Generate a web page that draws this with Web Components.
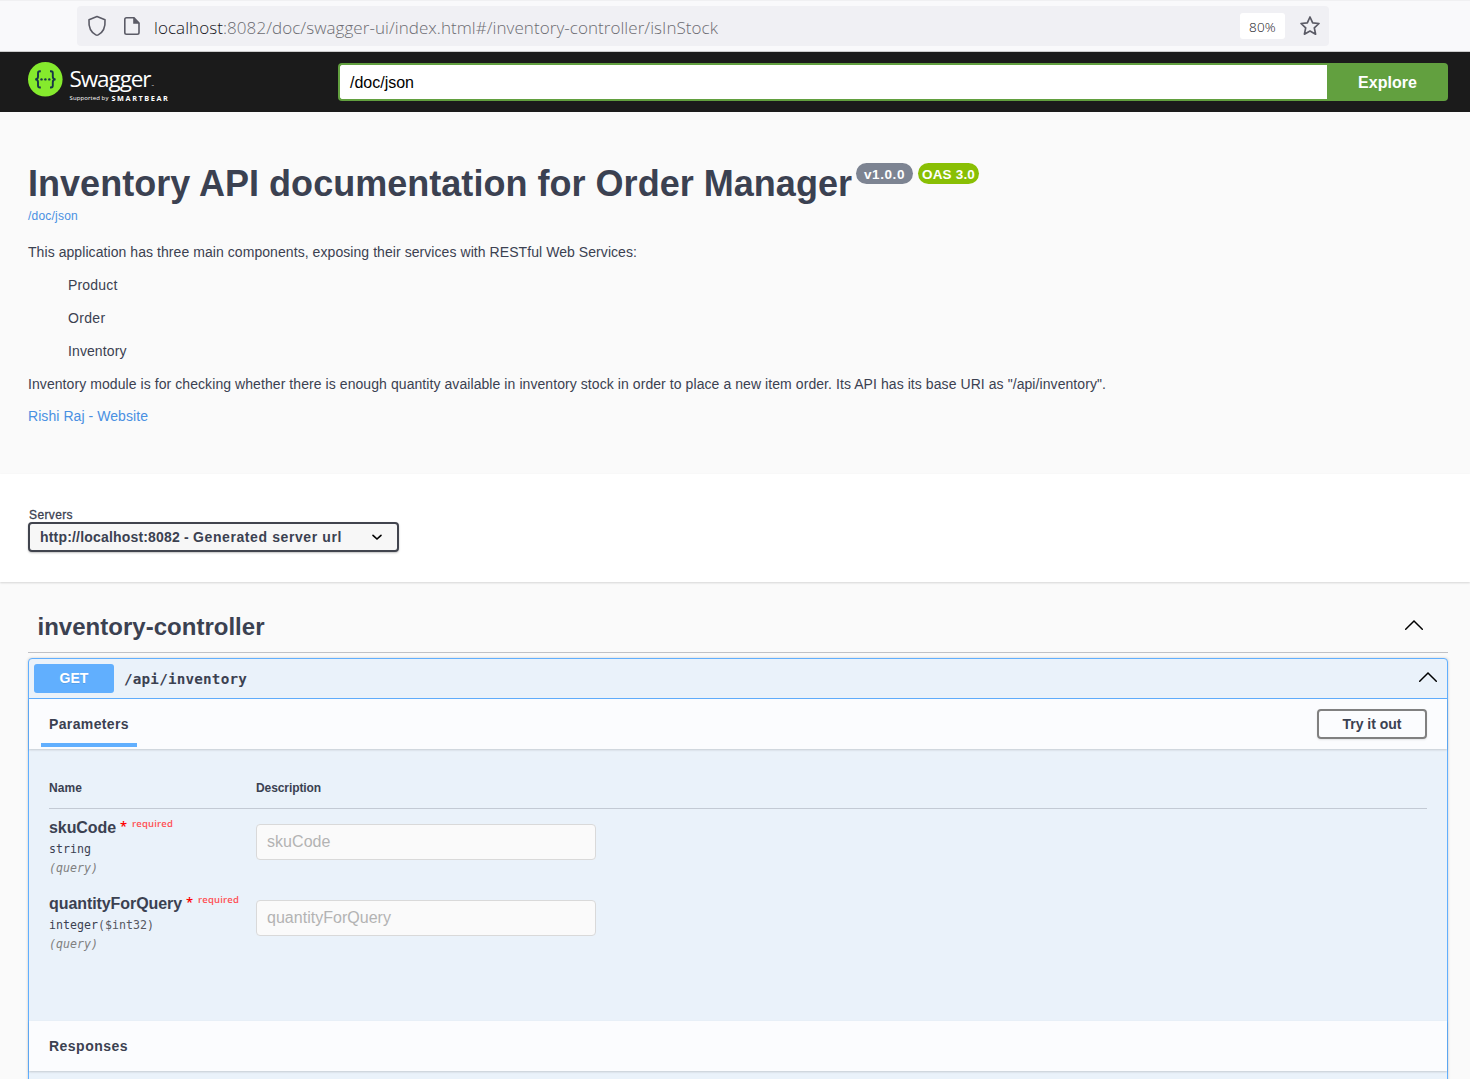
<!DOCTYPE html>
<html lang="en">
<head>
<meta charset="utf-8">
<title>Swagger UI</title>
<style>
html,body{margin:0;height:1079px;overflow:hidden;background:#fafafa}
body{font-family:"Liberation Sans",Arial,sans-serif;color:#3b4151}
</style>
</head>
<body>
<swagger-page></swagger-page>
<script>
const define = (name, html, setup) => customElements.define(name, class extends HTMLElement {
  connectedCallback() {
    if (this.shadowRoot) return;
    const t = document.createElement('template');
    t.innerHTML = html;
    this.attachShadow({mode: 'open'}).append(t.content.cloneNode(true));
    if (setup) setup(this, this.shadowRoot);
  }
});

// Single-line label whose tracking is spread so that it fills its "w" attribute.
customElements.define('text-run', class extends HTMLElement {
  connectedCallback() {
    if (this.shadowRoot) return;
    this.attachShadow({mode: 'open'}).innerHTML = `<style>:host{display:block;white-space:pre;flex:none}span{display:inline-block}</style><span><slot></slot></span>`;
    const w = +this.getAttribute('w');
    if (!w) return;
    this.style.width = w + 'px';
    const now = this.shadowRoot.querySelector('span').getBoundingClientRect().width;
    this.style.letterSpacing = ((w - now) / this.textContent.length) + 'px';
  }
});

define('browser-bar', `<style>
:host{display:flex;box-sizing:border-box;height:52px;padding:5px 141px 5px 77px;background:#f9f9fb;border-top:1px solid #f0f0f2;border-bottom:1px solid #ccc}
.field{flex:1;height:40px;display:flex;align-items:center;background:#f0f0f4;border-radius:4px;font-family:"Open Sans","Noto Sans",sans-serif;font-weight:300;color:#6c6c72}
svg{display:block;flex:none}
.shield{margin-left:10px}.doc{margin-left:16px}
.url{margin-left:13px;display:flex;font-size:17px;line-height:24px;padding-top:3px}
.url .host{color:#15141a}
.zoom{margin-left:auto;width:45px;height:26px;background:#fff;border-radius:3px;display:flex;justify-content:center;line-height:28px;font-size:13.5px;color:#15141a}
.star{margin:0 8px 0 14px}
</style>
<div class="field">
<svg class="shield" width="20" height="22" viewBox="0 0 20 22" fill="none" stroke="#5b5b66" stroke-width="1.6" stroke-linejoin="round"><path d="M10 1.5 18 4.7C18.5 11.500 16.500 17 11.200 19.900Q10 20.600 8.800 19.900C3.500 17 1.500 11.500 2 4.700Z"/></svg>
<svg class="doc" width="18" height="20" viewBox="0 0 18 20"><path d="M3.500 1.800H11L16 7V16.500Q16 18.200 14.300 18.200H3.500Q1.800 18.200 1.800 16.500V3.500Q1.800 1.800 3.500 1.800Z" fill="none" stroke="#5b5b66" stroke-width="1.6"/><path d="M10.200 1.500 16.500 7.800H10.200Z" fill="#5b5b66"/></svg>
<div class="url"><text-run class="host" w="69">localhost</text-run><text-run w="495">:8082/doc/swagger-ui/index.html#/inventory-controller/isInStock</text-run></div>
<div class="zoom"><text-run w="27">80%</text-run></div>
<svg class="star" width="22" height="22" viewBox="0 0 22 22"><path d="M11 2 13.700 7.800 20 8.500 15.300 12.900 16.600 19.200 11 16 5.400 19.200 6.700 12.900 2 8.500 8.300 7.800Z" fill="none" stroke="#5b5b66" stroke-width="1.7" stroke-linejoin="round"/></svg>
</div>`);

define('swagger-logo', `<style>
:host{display:flex;align-items:flex-start;height:42px;color:#fff;font-family:"Open Sans","Noto Sans",sans-serif}
svg{display:block}
.words{margin-left:6.5px;padding-top:1px}
.name{display:flex;align-items:flex-end;height:31px}
.big{font-size:22.500px;line-height:31px}
.tm{font-size:3px;line-height:16px;margin-left:1px}
.by{display:flex;gap:3px;height:8px;line-height:8px;font-size:6px;align-items:center}
.sb{font-size:7.3px;font-weight:700}
</style>
<svg width="35" height="35" viewBox="0 0 35 35"><circle cx="17.300" cy="17.300" r="17.300" fill="#85ea2d"/><g fill="none" stroke="#173647" stroke-width="1.900"><path d="M12.800 9.300H11.800Q10 9.300 10 11.200V14.800Q10 17.300 7.200 17.400Q10 17.500 10 20V23.600Q10 25.500 11.800 25.500H12.800M22 9.300H23Q24.800 9.300 24.800 11.200V14.800Q24.800 17.300 27.600 17.400Q24.800 17.500 24.800 20V23.600Q24.800 25.500 23 25.500H22"/></g><g fill="#173647"><circle cx="13.500" cy="17.400" r="1.200"/><circle cx="17.400" cy="17.400" r="1.200"/><circle cx="21.300" cy="17.400" r="1.200"/></g></svg>
<div class="words"><div class="name"><text-run class="big" w="81">Swagger</text-run><span class="tm">™</span></div>
<div class="by"><text-run w="39">Supported by</text-run><text-run class="sb" w="58">SMARTBEAR</text-run></div></div>`);

define('top-bar', `<style>
:host{display:flex;box-sizing:border-box;height:60px;padding:10px 22px 0 28px;background:#1b1b1b}
swagger-logo{width:310px}
.form{flex:1;display:flex;height:38px;margin-top:1px}
.input{flex:1;box-sizing:border-box;border:2px solid #62a03f;border-right:0;border-radius:4px 0 0 4px;background:#fff;color:#000;padding-left:10px;font-size:16px;line-height:35px}
.go{width:121px;background:#62a03f;border-radius:0 4px 4px 0;color:#fff;font-size:16px;font-weight:700;line-height:40px;display:flex;justify-content:center}
</style><swagger-logo></swagger-logo><div class="form"><div class="input"><text-run w="64">/doc/json</text-run></div><div class="go"><text-run w="59">Explore</text-run></div></div>`);

define('version-pill', `<style>
:host{display:flex;justify-content:center;height:21px;border-radius:11px;background:var(--pill);color:#fff;font-size:13.500px;font-weight:700;line-height:23px}
</style><slot></slot>`);

define('api-info', `<style>
:host{display:block;box-sizing:border-box;height:362px;padding:49px 28px 0;font-size:14px}
.head{display:flex;align-items:flex-start}
h2{margin:1px 0 0;font-size:36px;line-height:44px}
version-pill{margin-top:2px}
.v{--pill:#7d8492;width:57px;margin-left:5px}
.oas{--pill:#89bf04;width:61px;margin-left:5px}
.src{font-size:12px;line-height:14px;margin-top:3px}
.src,.contact{color:#4990e2}
.p{line-height:17px;margin-top:21px}
.li{line-height:17px;margin:16px 0 0 40px}
.last{margin-top:16px}
.contact{line-height:17px;margin-top:15px}
</style>
<div class="head"><h2><text-run w="824">Inventory API documentation for Order Manager</text-run></h2><version-pill class="v" style="margin-left:4px"><text-run w="41">v1.0.0</text-run></version-pill><version-pill class="oas"><text-run w="53">OAS 3.0</text-run></version-pill></div>
<text-run class="src" w="50">/doc/json</text-run>
<text-run class="p" w="609">This application has three main components, exposing their services with RESTful Web Services:</text-run>
<text-run class="li" w="49.5">Product</text-run><text-run class="li" w="37.5">Order</text-run><text-run class="li" w="58.5">Inventory</text-run>
<text-run class="p last" w="1078">Inventory module is for checking whether there is enough quantity available in inventory stock in order to place a new item order. Its API has its base URI as "/api/inventory".</text-run>
<text-run class="contact" w="120">Rishi Raj - Website</text-run>`);

define('server-picker', `<style>
:host{display:block;box-sizing:border-box;height:108px;padding:34px 28px 0;background:#fff;box-shadow:0 1px 2px rgba(0,0,0,.15)}
.cap{font-size:12px;line-height:14px;-webkit-text-stroke:.3px #3b4151;margin-left:1px}
.select{display:flex;align-items:center;justify-content:space-between;box-sizing:border-box;width:371px;height:30px;border:2px solid #41444e;border-radius:4px;background:#f7f7f7;box-shadow:0 1px 2px rgba(0,0,0,.25);padding:0 14px 0 10px;font-size:14px;font-weight:700;line-height:26px}
.value{display:flex}
</style><text-run class="cap" w="44">Servers</text-run>
<div class="select"><div class="value"><text-run w="140">http://localhost:8082</text-run><text-run w="13"> - </text-run><text-run w="149">Generated server url</text-run></div><svg width="12" height="8" viewBox="0 0 12 8"><path d="M2 2.300 6 6 10 2.300" fill="none" stroke="#000" stroke-width="1.600" stroke-linecap="round"/></svg></div>`);

define('chevron-up', `<style>:host{display:block}svg{display:block}</style><svg width="20" height="12" viewBox="0 0 20 12"><path d="M1.700 10.200 10 2 18.300 10.200" fill="none" stroke="#000" stroke-width="1.500" stroke-linecap="round"/></svg>`);

define('tag-header', `<style>
:host{display:flex;box-sizing:border-box;height:43px;margin:28px 22px 0 28px;padding:0 24px 9px 9.500px;align-items:center;justify-content:space-between;border-bottom:1px solid #c0c1c5;font-size:24px;font-weight:700;line-height:30px}
chevron-up{margin-top:-3px}
</style><text-run w="227">inventory-controller</text-run><chevron-up></chevron-up>`);

define('section-bar', `<style>
:host{display:flex;position:relative;box-sizing:border-box;height:50px;padding:0 20px 0 12px;align-items:center;justify-content:space-between;background:#fbfcfe;box-shadow:0 1px 2px rgba(0,0,0,.16);font-size:14px;font-weight:700}
.tab{box-sizing:border-box;height:50px;padding:0 8px;line-height:50px}
:host([active]) .tab{height:48px;align-self:flex-start;border-bottom:4px solid #61affe}
</style><div class="tab"><slot></slot></div><slot name="action"></slot>`);

define('outline-button', `<style>
:host{display:flex;justify-content:center;box-sizing:border-box;width:110px;height:30px;border:2px solid #808080;border-radius:4px;font-size:14px;font-weight:700;line-height:26px;box-shadow:0 1px 2px rgba(0,0,0,.1)}
</style><slot></slot>`);

define('param-row', `<style>
:host{display:flex;height:76px;box-sizing:border-box;padding-top:9px;font-family:"DejaVu Sans Mono",monospace;font-size:11.600px}
.left{width:207px}
.name{display:flex;font:700 16px/20px "Liberation Sans",Arial,sans-serif}
.star{color:#f00;font:13px/16px "Open Sans",sans-serif;width:12px;margin-left:4px;font-weight:600}
.req{color:#ff4f52;font:600 9.500px/12px "Open Sans",sans-serif}
.type{line-height:16px;margin-top:3px;display:flex}
.fmt{color:#55585f}
.in{line-height:16px;margin-top:3px;color:#808080;font-style:italic}
.box{box-sizing:border-box;width:340px;height:36px;margin-top:6px;border:1px solid #d9d9d9;border-radius:4px;background:#fafafa;padding-left:10px;color:#b3b3b3;font:16px/34px "Liberation Sans",Arial,sans-serif}
</style><div class="left"><div class="name"><text-run id="n"></text-run><span class="star">*</span><text-run class="req" w="41">required</text-run></div><div class="type"><text-run id="t"></text-run><text-run id="f" class="fmt"></text-run></div><text-run class="in" w="49">(query)</text-run></div><div class="box"><text-run id="p"></text-run></div>`,
(host, root) => {
  const put = (id, text, w) => {
    const old = root.getElementById(id);
    if (!text) { old.remove(); return; }
    const el = document.createElement('text-run');
    el.id = id; el.className = old.className; el.textContent = text; el.setAttribute('w', w);
    old.replaceWith(el);
  };
  const name = host.getAttribute('name'), type = host.getAttribute('type'), fmt = host.getAttribute('format');
  put('n', name, host.getAttribute('name-w'));
  put('t', type, type.length * 7);
  put('f', fmt, fmt ? fmt.length * 7 : 0);
  put('p', name, host.getAttribute('hint-w'));
});

define('op-block', `<style>
:host{display:flex;flex-direction:column;box-sizing:border-box;margin:5px 22px 0 28px;height:500px;border:1px solid #61affe;border-radius:4px;background:#eaf2fa;box-shadow:0 0 3px rgba(0,0,0,.19)}
.summary{display:flex;flex:none;align-items:center;box-sizing:border-box;height:40px;padding:0 9px 0 5px;border-bottom:1px solid #61affe}
.verb{display:flex;justify-content:center;width:80px;height:29px;border-radius:3px;background:#61affe;color:#fff;font-size:14px;font-weight:700;line-height:29px;text-shadow:0 1px 0 rgba(0,0,0,.1)}
.path{margin-left:10px;font-family:"DejaVu Sans Mono",monospace;font-size:14.300px;font-weight:700;line-height:20px}
chevron-up{margin-left:auto;margin-top:-4px}
section-bar{flex:none}
.params{height:272px;box-sizing:border-box;padding:30px 20px 0}
.cols{display:flex;box-sizing:border-box;height:30px;border-bottom:1px solid #c3cad4;font-size:12px;font-weight:700;line-height:18px}
.cols div{width:207px}
</style>
<div class="summary"><div class="verb"><text-run w="29">GET</text-run></div><text-run class="path" w="123">/api/inventory</text-run><chevron-up></chevron-up></div>
<section-bar active><text-run w="80">Parameters</text-run><outline-button slot="action"><text-run w="59">Try it out</text-run></outline-button></section-bar>
<div class="params"><div class="cols"><div><text-run w="33">Name</text-run></div><text-run w="65">Description</text-run></div>
<param-row name="skuCode" name-w="67" type="string" hint-w="63.5"></param-row>
<param-row name="quantityForQuery" name-w="133" type="integer" format="($int32)" hint-w="124"></param-row></div>
<section-bar><text-run w="79">Responses</text-run></section-bar>`);

define('swagger-page', `<style>:host{display:block;height:1079px;overflow:hidden;background:#fafafa}</style>
<browser-bar></browser-bar><top-bar></top-bar><api-info></api-info><server-picker></server-picker><tag-header></tag-header><op-block></op-block>`);
</script>
</body>
</html>
